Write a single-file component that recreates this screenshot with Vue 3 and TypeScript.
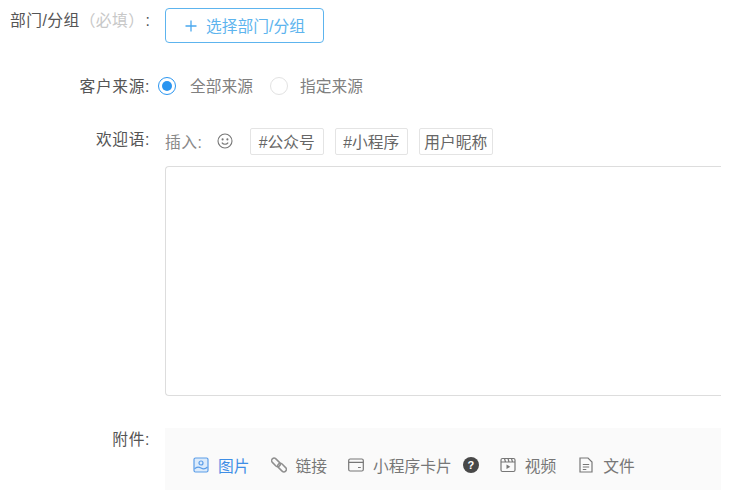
<script setup lang="ts">
const tags: string[] = ['#公众号', '#小程序', '用户昵称']
</script>

<template>
  <div class="page">
    <div class="row first">
      <div class="first-label">部门/分组<span class="req">（必填）</span><span class="colon">:</span></div>
      <button class="pick" type="button">
        <svg width="12" height="12" viewBox="0 0 12 12"><path d="M6 .5v11M.5 6h11" stroke="#4aa8ee" stroke-width="1.3" fill="none" /></svg>
        <span>选择部门/分组</span>
      </button>
    </div>

    <div class="row source">
      <div class="label">客户来源:</div>
      <div class="radio on"><i></i></div>
      <span class="radio-text t1">全部来源</span>
      <div class="radio"></div>
      <span class="radio-text t2">指定来源</span>
    </div>

    <div class="row welcome">
      <div class="label">欢迎语:</div>
      <div class="body">
        <div class="toolbar">
          <span class="insert">插入:</span>
          <svg class="smile" width="16" height="16" viewBox="0 0 16 16" fill="none" stroke="#777" stroke-width="1.1">
            <circle cx="8" cy="8" r="7" />
            <circle cx="5.6" cy="6.4" r=".5" fill="#777" />
            <circle cx="10.4" cy="6.4" r=".5" fill="#777" />
            <path d="M4.8 9.6c1.6 2.2 4.8 2.2 6.4 0" />
          </svg>
          <span v-for="t in tags" :key="t" class="tag">{{ t }}</span>
        </div>
        <div class="textarea"></div>
      </div>
    </div>

    <div class="row attach">
      <div class="label">附件:</div>
      <div class="attach-bar">
        <span class="item active">
          <svg width="16" height="16" viewBox="0 0 16 16" fill="none" stroke="#5b9de8" stroke-width="1.2">
            <rect x="1" y="1" width="14" height="14" rx="1.5" fill="#dcebfb" />
            <circle cx="8" cy="6" r="2" />
            <path d="M1.5 12c2-2.5 4-2.5 6.500-1s4.500 1 6.500-1" />
          </svg>
          图片
        </span>
        <span class="item">
          <svg width="16" height="16" viewBox="0 0 16 16" fill="none" stroke="#8f8f8f" stroke-width="1.5">
            <rect x="2.400" y=".4" width="5" height="10" rx="2.500" transform="rotate(-45 4.900 5.400)" />
            <rect x="8.600" y="5.600" width="5" height="10" rx="2.500" transform="rotate(-45 11.100 10.600)" />
          </svg>
          链接
        </span>
        <span class="item">
          <svg width="16" height="14" viewBox="0 0 16 14" fill="none" stroke="#777" stroke-width="1.200">
            <rect x=".7" y="1" width="14.600" height="12" rx="1.500" />
            <path d="M.7 4.300h14.600M10 9.500h2.800" />
          </svg>
          小程序卡片
          <span class="help">?</span>
        </span>
        <span class="item">
          <svg width="16" height="16" viewBox="0 0 16 16" fill="none" stroke="#777" stroke-width="1.200">
            <rect x="1" y="1.500" width="14" height="13" rx="1.500" />
            <path d="M1 5h14M4.500 1.500 5.500 5M8 1.500 9 5M11.500 1.500l1 3.500" />
            <path d="M6.500 7.500v4.500l3.800-2.200z" fill="#777" stroke="none" />
          </svg>
          视频
        </span>
        <span class="item file">
          <svg width="16" height="16" viewBox="0 0 16 16" fill="none" stroke="#777" stroke-width="1.200">
            <path d="M2 1h8l4 4v10H2z" />
            <path d="M4.800 7.500h6.400M4.800 10h6.400M4.800 12.500h3.500" />
          </svg>
          文件
        </span>
      </div>
    </div>
  </div>
</template>

<style>
html, body { margin: 0; background: #fff; }
</style>

<style scoped>
.page {
  width: 734px;
  height: 490px;
  overflow: hidden;
  font-family: "Liberation Sans", "Noto Sans CJK SC", sans-serif;
  font-size: 15.75px;
  color: #555;
  box-sizing: border-box;
  padding-top: 8px;
}
.row { display: flex; }
.first { align-items: flex-start; height: 35px; padding-left: 10px; }
.first-label { width: 155px; line-height: 25px; color: #555; white-space: nowrap; letter-spacing: .45px; }
.req { color: #c8c8c8; }
.colon { color: #555; margin-left: 1px; }
.pick {
  width: 159px;
  height: 35px;
  box-sizing: border-box;
  border: 1px solid #5db4ee;
  border-radius: 4px;
  background: #fff;
  color: #5db4ee;
  font: inherit;
  display: flex;
  align-items: center;
  padding: 0 0 0 19px;
  gap: 9px;
}
.label {
  width: 150px;
  text-align: right;
  color: #555;
  white-space: nowrap;
  flex: none;
  line-height: 24px;
  letter-spacing: .6px;
}
.source { margin-top: 30px; height: 26px; align-items: center; }
.source .label { margin-top: 1px; }
.radio {
  margin-left: 8px;
  width: 18px;
  height: 18px;
  box-sizing: border-box;
  border: 1px solid #e2e2e2;
  border-radius: 50%;
  display: flex;
  align-items: center;
  justify-content: center;
  flex: none;
}
.radio.on { border-color: #2a95f0; }
.radio i { width: 10px; height: 10px; border-radius: 50%; background: #2a95f0; }
.radio-text { margin-left: 14px; color: #808080; margin-top: -1px; }
.t1 { margin-right: 9px; }
.t2 { margin-left: 12px; }
.welcome { margin-top: 28px; }
.welcome .label { margin-top: 1px; }
.body { margin-left: 15px; width: 556px; }
.toolbar { display: flex; align-items: center; height: 29px; }
.insert { color: #888; width: 52px; letter-spacing: .5px; white-space: nowrap; }
.smile { margin-right: 17px; margin-top: -2px; }
.tag {
  box-sizing: border-box;
  width: 73.5px;
  height: 27px;
  line-height: 27px;
  text-align: center;
  border: 1px solid #e4e4e4;
  border-radius: 2px;
  margin-right: 11px;
  color: #666;
  white-space: nowrap;
}
.textarea {
  margin-top: 10px;
  height: 230px;
  box-sizing: border-box;
  border: 1px solid #ddd;
  border-right: 0;
  border-radius: 4px 0 0 4px;
}
.attach { margin-top: 32px; }
.attach-bar {
  margin-left: 15px;
  width: 556px;
  height: 62px;
  background: #fafafa;
  display: flex;
  align-items: flex-start;
  padding: 27px 0 0 28px;
  box-sizing: border-box;
  gap: 21px;
  color: #777;
}
.item { display: inline-flex; align-items: center; gap: 9px; white-space: nowrap; height: 20px; }
.item.active { color: #3f8ee6; }
.file { margin-left: 1px; }
.help {
  width: 16px;
  height: 16px;
  border-radius: 50%;
  background: #484848;
  color: #fff;
  font-size: 11px;
  font-weight: 700;
  line-height: 16px;
  text-align: center;
  margin-left: 2px;
}
</style>
